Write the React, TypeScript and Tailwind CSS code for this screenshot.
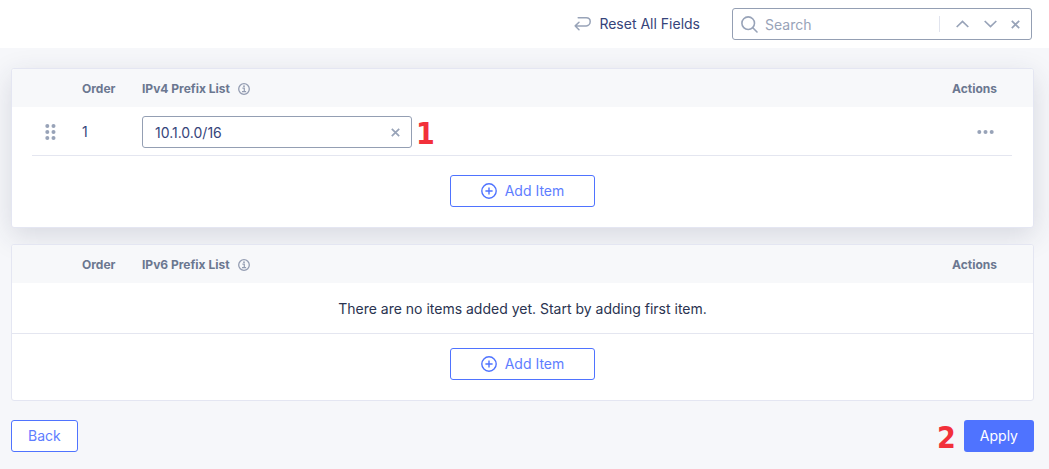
import { useState } from 'react';
import type { ReactNode } from 'react';

function InfoIcon() {
  return (
    <svg className="size-3 shrink-0" viewBox="0 0 12 12" fill="none" stroke="#949db2" aria-hidden="true">
      <circle cx="6" cy="6" r="5.3" strokeWidth="1.3" />
      <path d="M4.4 5.2H6.3V8.6M4 8.7H8.1" strokeWidth="1.2" />
      <circle cx="6" cy="3.2" r="0.9" fill="#949db2" stroke="none" />
    </svg>
  );
}

function CloseIcon() {
  return (
    <svg className="size-[9px]" viewBox="0 0 9 9" fill="none" stroke="#98a3b8" strokeWidth="1.7" aria-hidden="true">
      <path d="M0.8 0.8L8.2 8.2M8.2 0.8L0.8 8.2" />
    </svg>
  );
}

function AddItemButton() {
  return (
    <button
      type="button"
      className="flex h-8 w-[145px] items-center justify-center gap-2 rounded-[3px] border border-[#4f73ff] bg-white text-sm text-[#5e7dff]"
    >
      <svg className="size-4" viewBox="0 0 16 16" fill="none" stroke="#4f73ff" strokeWidth="1.4" aria-hidden="true">
        <circle cx="8" cy="8" r="7.2" />
        <path d="M8 4.4V11.6M4.4 8H11.6" />
      </svg>
      Add Item
    </button>
  );
}

function PrefixTable({ title, children }: { title: string; children: ReactNode }) {
  return (
    <table className="w-full table-fixed border-separate border-spacing-0">
      <colgroup>
        <col className="w-5" />
        <col className="w-[50px]" />
        <col className="w-[60px]" />
        <col />
        <col className="w-[60px]" />
        <col className="w-[21px]" />
      </colgroup>
      <thead>
        <tr className="h-[38px] bg-[#f7f8fa] text-left text-xs text-[#6b7790] *:pt-0.5">
          <td />
          <td />
          <th scope="col" className="font-bold">Order</th>
          <th scope="col" className="font-bold">
            <span className="flex items-center gap-2">
              {title}
              <InfoIcon />
            </span>
          </th>
          <th scope="col" className="font-bold">Actions</th>
          <td />
        </tr>
      </thead>
      <tbody>{children}</tbody>
    </table>
  );
}

export default function App() {
  const [prefix, setPrefix] = useState('10.1.0.0/16');
  const [query, setQuery] = useState('');

  return (
    <div className="min-h-screen bg-[#f6f7fa] font-['Inter',sans-serif] text-sm text-[#36447a]">
      <header className="flex h-12 items-center justify-end gap-8 bg-white pr-[17px]">
        <button type="button" className="flex items-center gap-2">
          <svg className="h-4 w-[17px]" viewBox="0 0 17 16" fill="none" stroke="#98a3b8" strokeWidth="1.5" strokeLinecap="round" strokeLinejoin="round" aria-hidden="true">
            <path d="M4.2 1.8H12.2C14.6 1.8 16.2 3.3 16.2 5.6S14.6 9.9 12.2 9.9H1.2M5 6.2L1.2 9.9L5 13.8" />
          </svg>
          Reset All Fields
        </button>
        <div className="flex h-8 w-[300px] items-center rounded-[3px] border border-[#949fb3] bg-white pl-2">
          <svg className="size-[17px] shrink-0" viewBox="0 0 17 17" fill="none" stroke="#98a3b8" strokeWidth="1.6" strokeLinecap="round" aria-hidden="true">
            <circle cx="7.2" cy="7.2" r="6.3" />
            <path d="M11.8 11.8L16 16" />
          </svg>
          <input
            type="text"
            aria-label="Search"
            placeholder="Search"
            value={query}
            onChange={(e) => setQuery(e.target.value)}
            className="h-full min-w-0 flex-1 bg-transparent px-[7px] outline-none placeholder:text-[#98a3b8]"
          />
          <div className="flex h-4 items-center border-l border-[#e1e4ee] pr-[11px] pl-4">
            <button type="button" aria-label="Previous match">
              <svg className="h-2 w-[13px]" viewBox="0 0 13 8" fill="none" stroke="#98a3b8" strokeWidth="1.7" aria-hidden="true">
                <path d="M0.7 7L6.5 1.4L12.3 7" />
              </svg>
            </button>
            <button type="button" aria-label="Next match" className="ml-[15px]">
              <svg className="h-2 w-[13px]" viewBox="0 0 13 8" fill="none" stroke="#98a3b8" strokeWidth="1.7" aria-hidden="true">
                <path d="M0.7 1L6.5 6.6L12.3 1" />
              </svg>
            </button>
            <button type="button" aria-label="Clear search" className="ml-[14px]" onClick={() => setQuery('')}>
              <CloseIcon />
            </button>
          </div>
        </div>
      </header>

      <main className="flex flex-col gap-4 pt-5 pr-[15px] pb-4 pl-[11px]">
        <section className="overflow-hidden rounded-[3px] border border-[#e4e6f2] bg-white shadow-[0_8px_28px_rgba(40,50,80,0.15)]">
          <PrefixTable title="IPv4 Prefix List">
            <tr className="h-[49px] *:border-[#e4e6f0] *:pt-0.5">
              <td />
              <td className="border-b">
                <button type="button" aria-label="Drag to reorder" className="ml-[13px] block">
                  <svg className="h-4 w-[11px]" viewBox="0 0 11 16" fill="#98a3b8" aria-hidden="true">
                    <circle cx="2.3" cy="2" r="2" />
                    <circle cx="8.5" cy="2" r="2" />
                    <circle cx="2.3" cy="8" r="2" />
                    <circle cx="8.5" cy="8" r="2" />
                    <circle cx="2.3" cy="14" r="2" />
                    <circle cx="8.5" cy="14" r="2" />
                  </svg>
                </button>
              </td>
              <td className="border-b">1</td>
              <td className="border-b">
                <div className="flex items-center gap-1">
                  <div className="flex h-8 w-[270px] items-center rounded-[3px] border border-[#949fb3] bg-white pr-[11px]">
                    <input
                      type="text"
                      aria-label="IPv4 prefix"
                      value={prefix}
                      onChange={(e) => setPrefix(e.target.value)}
                      className="h-full min-w-0 flex-1 bg-transparent pl-3 outline-none"
                    />
                    <button type="button" aria-label="Clear prefix" onClick={() => setPrefix('')}>
                      <CloseIcon />
                    </button>
                  </div>
                  <span className="h-8 font-['DejaVu_Sans_Condensed','DejaVu_Sans',sans-serif] text-3xl leading-9 font-bold text-[#f2303a]">1</span>
                </div>
              </td>
              <td className="border-b">
                <button type="button" aria-label="Row actions" className="ml-[25px] block">
                  <svg className="h-1 w-[17px]" viewBox="0 0 17 4" fill="#98a3b8" aria-hidden="true">
                    <circle cx="2.3" cy="2" r="2" />
                    <circle cx="8.5" cy="2" r="2" />
                    <circle cx="14.7" cy="2" r="2" />
                  </svg>
                </button>
              </td>
              <td />
            </tr>
          </PrefixTable>
          <div className="flex justify-center pt-[19px] pb-5">
            <AddItemButton />
          </div>
        </section>

        <section className="overflow-hidden rounded-[3px] border border-[#e4e6f2] bg-white">
          <PrefixTable title="IPv6 Prefix List">
            <tr className="h-[51px]">
              <td colSpan={6} className="border-b border-[#e4e6f0] pt-0.5 text-center text-[#2a3350]">
                There are no items added yet. Start by adding first item.
              </td>
            </tr>
          </PrefixTable>
          <div className="flex justify-center pt-[14px] pb-5">
            <AddItemButton />
          </div>
        </section>

        <footer className="flex items-center justify-between pt-[3px]">
          <button type="button" className="h-8 rounded-[3px] border border-[#4f73ff] bg-white px-4 text-[#5e7dff]">
            Back
          </button>
          <div className="flex items-center gap-2">
            <span className="h-8 font-['DejaVu_Sans_Condensed','DejaVu_Sans',sans-serif] text-3xl leading-9 font-bold text-[#f2303a]">2</span>
            <button type="button" className="h-8 rounded-[3px] bg-[#4f73ff] px-4 text-white">
              Apply
            </button>
          </div>
        </footer>
      </main>
    </div>
  );
}
